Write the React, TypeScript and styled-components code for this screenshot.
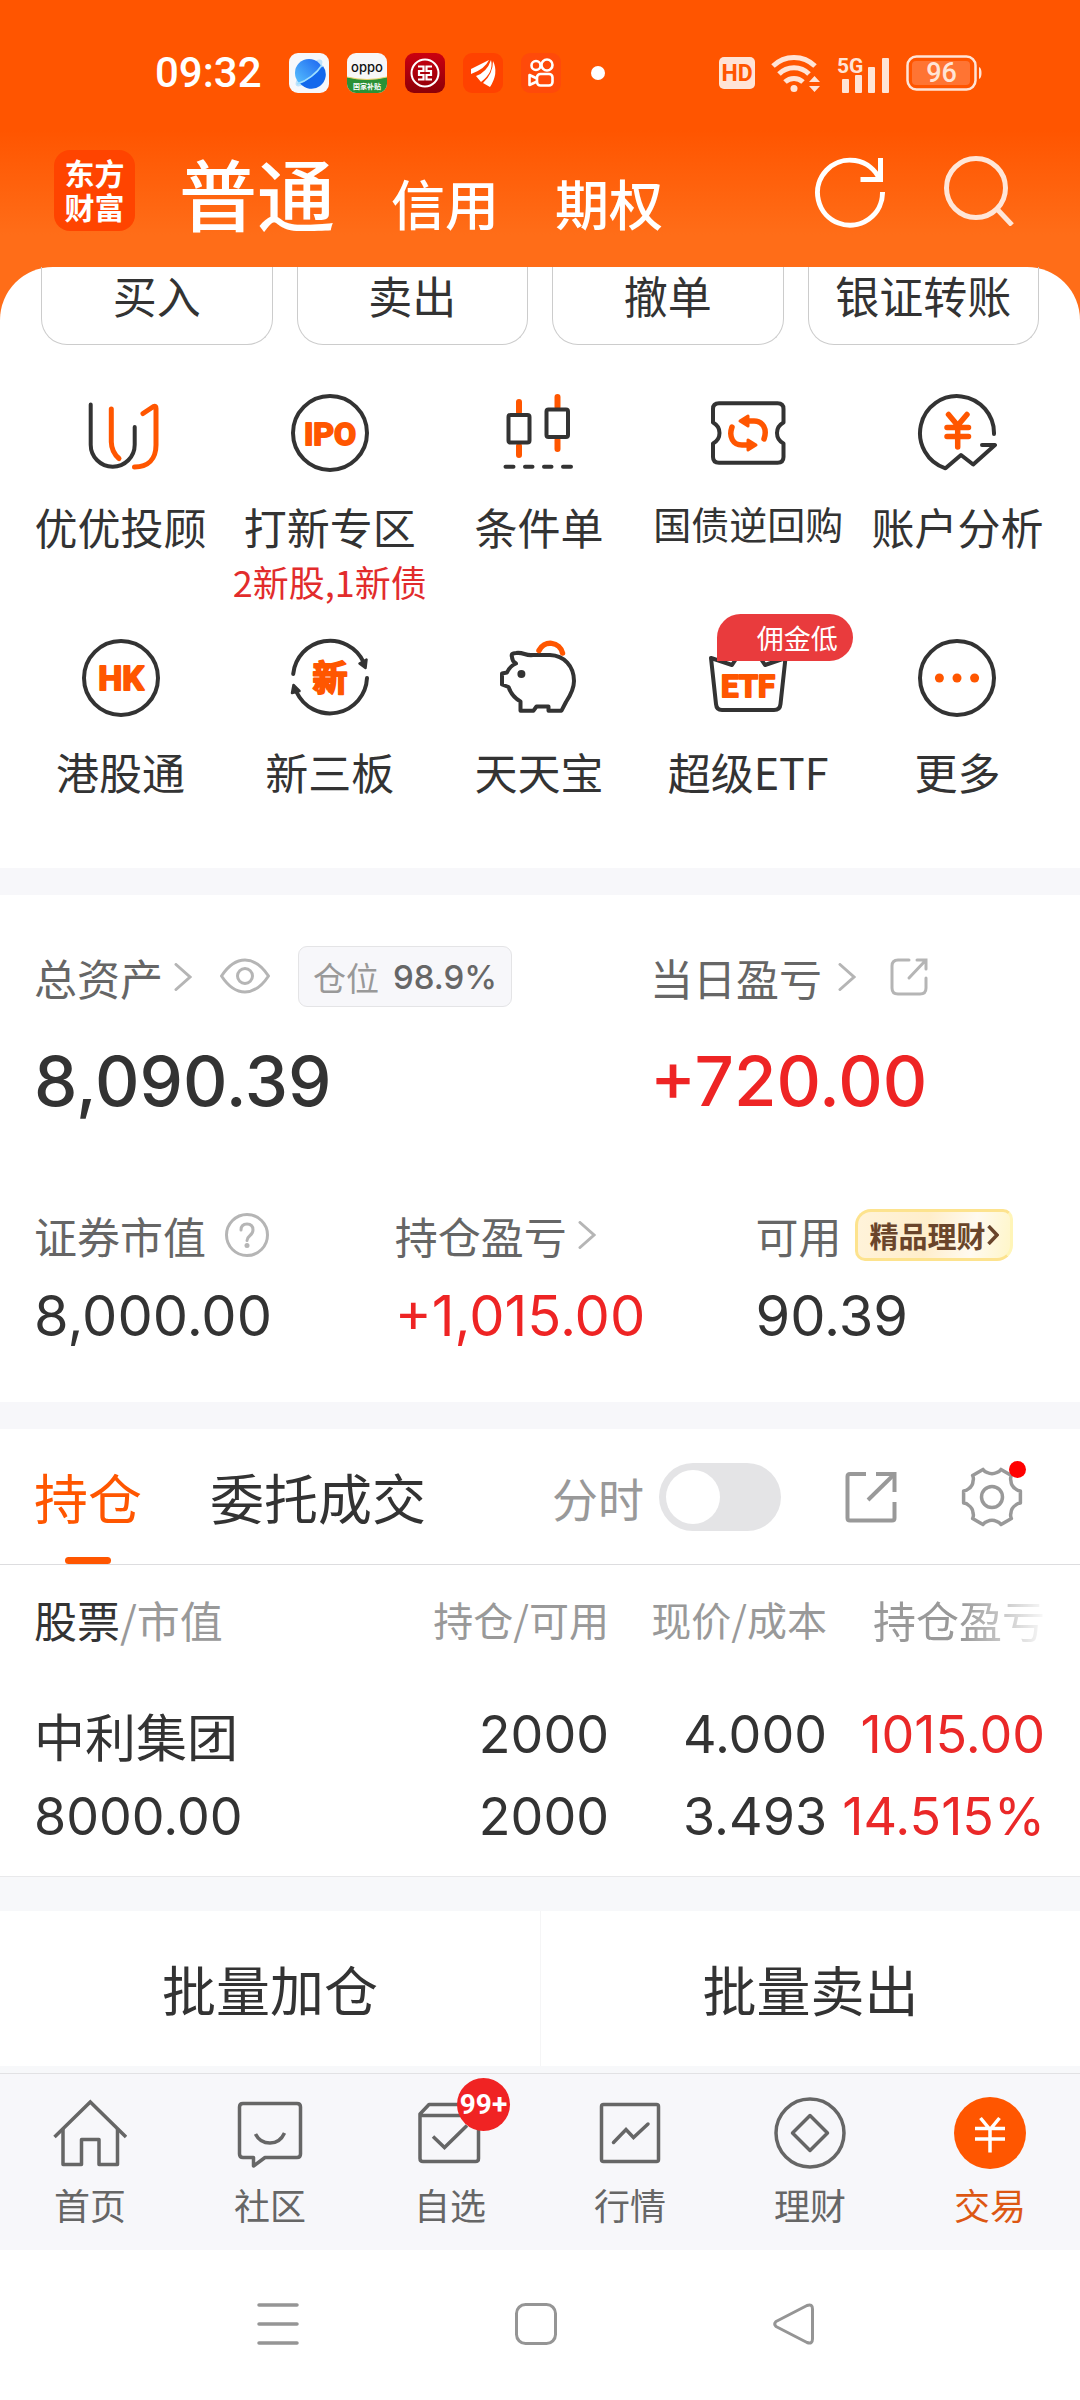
import React, { useState } from "react";
import styled, { createGlobalStyle } from "styled-components";

const ORANGE = "#ff5600";
const INK = "#333333";
const CJK = '"Noto Sans CJK SC", "Noto Sans", sans-serif';
const NUM = 'Inter, "Noto Sans CJK SC", sans-serif';
const ROBOTO = "Roboto, sans-serif";

const GlobalStyle = createGlobalStyle`
  *, *::before, *::after { box-sizing: border-box; }
  body { margin: 0; background: #ffffff; color: ${INK}; font-family: ${CJK}; }
  button { margin: 0; padding: 0; border: 0; background: none; color: inherit; font: inherit; cursor: pointer; }
  a { color: inherit; text-decoration: none; }
  svg { display: block; flex: none; }
`;

/* ---------- layout ---------- */

const Page = styled.div`
  min-height: 100vh;
  display: flex;
  flex-direction: column;
  background: #ffffff;
`;

const Header = styled.header`
  padding: 53px 0 89px;
  background: linear-gradient(180deg, #ff5500 0, #ff5500 130px, #ff6d18 235px, #ff6d18 100%);
  color: #ffffff;
`;

const StatusBar = styled.div`
  display: flex;
  align-items: center;
  justify-content: space-between;
  height: 40px;
  padding: 0 98px 0 155px;
`;

const StatusGroup = styled.div<{ $gap: number }>`
  display: flex;
  align-items: center;
  gap: ${(p) => p.$gap}px;
`;

const Clock = styled.time`
  margin-right: 9px;
  font-family: ${ROBOTO};
  font-size: 42px;
  font-weight: 500;
  line-height: 40px;
`;

const StatusDot = styled.span`
  width: 14px;
  height: 14px;
  margin-left: 12px;
  border-radius: 50%;
  background: #ffffff;
`;

const TopNav = styled.nav`
  display: flex;
  align-items: center;
  height: 81px;
  margin-top: 57px;
  padding: 0 66px 0 54px;
`;

const Logo = styled.div`
  width: 81px;
  height: 81px;
  padding: 5px 10px;
  border-radius: 16px;
  background: #ff4400;
  font-size: 30px;
  font-weight: 700;
  line-height: 34px;
  text-align: center;
  overflow-wrap: anywhere;
`;

const AccountTabs = styled.div`
  display: flex;
  align-items: baseline;
  gap: 56px;
  margin: 14px 0 0 44px;
`;

const AccountTab = styled.button<{ $active?: boolean }>`
  font-size: ${(p) => (p.$active ? 78 : 54)}px;
  font-weight: 500;
  line-height: 80px;
`;

const TopActions = styled.div`
  display: flex;
  align-items: center;
  gap: 58px;
  margin-left: auto;
`;

const Panel = styled.section`
  margin-top: -53px;
  padding-bottom: 69px;
  border-radius: 53px 53px 0 0;
  background: #ffffff;
`;

const QuickActions = styled.div`
  display: grid;
  grid-template-columns: repeat(4, 1fr);
  gap: 24px;
  padding: 0 41px;
`;

const QuickButton = styled.button`
  padding: 4px 0 24px;
  border: 1px solid #cccccc;
  border-top: 0;
  border-radius: 0 0 26px 26px;
  font-size: 44px;
  line-height: 49px;
`;

const FeatureGrid = styled.div`
  display: grid;
  grid-template-columns: repeat(5, 1fr);
  row-gap: 30px;
  margin-top: 47px;
  padding: 0 18px 0 16px;
`;

const Feature = styled.a`
  position: relative;
  display: flex;
  flex-direction: column;
  align-items: center;
  white-space: nowrap;
`;

const FeatureLabel = styled.span<{ $compact?: boolean }>`
  margin-top: 24px;
  font-size: ${(p) => (p.$compact ? 38 : 43)}px;
  line-height: ${(p) => (p.$compact ? 50 : 56)}px;
`;

const FeatureNote = styled.span`
  margin-top: 3px;
  margin-bottom: 2px;
  color: #e22c2c;
  font-size: 36px;
  line-height: 48px;
`;

const PromoBadge = styled.span`
  position: absolute;
  top: -23px;
  left: 35%;
  padding: 0 15px 0 40px;
  border-radius: 24px 24px 24px 0;
  background: #e93b3d;
  color: #ffffff;
  font-size: 27px;
  line-height: 47px;
`;

const Divider = styled.div`
  height: 27px;
  background: #f7f7fa;
`;

const Assets = styled.section`
  padding: 51px 36px 56px 34px;
`;

const AssetRow = styled.div<{ $columns: string }>`
  display: grid;
  grid-template-columns: ${(p) => p.$columns};

  & + & { margin-top: 88px; }
`;

const AssetHead = styled.div<{ $gap: number; $height: number }>`
  display: flex;
  align-items: center;
  gap: ${(p) => p.$gap}px;
  height: ${(p) => p.$height}px;
  color: #666666;
  font-size: 43px;
  line-height: 52px;
  white-space: nowrap;
`;

const AssetLink = styled.a<{ $gap: number }>`
  display: flex;
  align-items: center;
  gap: ${(p) => p.$gap}px;
`;

const AssetValue = styled.div<{ $large?: boolean; $rise?: boolean }>`
  margin-top: ${(p) => (p.$large ? 34 : 25)}px;
  color: ${(p) => (p.$rise ? "#ee2424" : INK)};
  font-family: ${NUM};
  font-size: ${(p) => (p.$large ? 69 : 56)}px;
  font-weight: ${(p) => (p.$large ? 500 : 400)};
  line-height: ${(p) => (p.$large ? 80 : 60)}px;
`;

const PositionTag = styled.span`
  display: flex;
  align-items: center;
  gap: 14px;
  height: 61px;
  padding: 0 14px;
  border: 1px solid #e4e4e6;
  border-radius: 9px;
  background: #f7f7fa;
  color: #999999;
  font-size: 33px;
`;

const PositionValue = styled.b`
  color: #666666;
  font-family: ${NUM};
  font-size: 33px;
  font-weight: 500;
`;

const WealthBadge = styled.a`
  display: flex;
  align-items: center;
  gap: 2px;
  height: 52px;
  padding: 0 11px;
  border: 3px solid #fde38e;
  border-right-color: #fff5b8;
  border-radius: 16px 10px 16px 10px;
  background: linear-gradient(100deg, #fff3da 0%, #ffeecb 45%, #fffaf0 75%, #fff6c8 100%);
  color: #6a452b;
  font-size: 29px;
  font-weight: 700;
`;

const TabBar = styled.div`
  display: flex;
  align-items: center;
  height: 136px;
  padding: 0 57px 0 34px;
  border-bottom: 1px solid #dddddf;
`;

const Tabs = styled.div`
  display: flex;
  align-self: stretch;
  gap: 68px;
`;

const Tab = styled.button<{ $active?: boolean }>`
  position: relative;
  color: ${(p) => (p.$active ? ORANGE : INK)};
  font-size: 54px;
  line-height: 60px;

  &::after {
    content: "";
    display: ${(p) => (p.$active ? "block" : "none")};
    position: absolute;
    bottom: 0;
    left: 50%;
    width: 46px;
    height: 7px;
    border-radius: 4px;
    background: ${ORANGE};
    transform: translateX(-50%);
  }
`;

const TabTools = styled.div`
  display: flex;
  align-items: center;
  gap: 64px;
  margin-left: auto;
`;

const SwitchLabel = styled.label`
  display: flex;
  align-items: center;
  gap: 15px;
  color: #999999;
  font-size: 46px;
  line-height: 60px;
`;

const Switch = styled.input`
  appearance: none;
  position: relative;
  width: 122px;
  height: 68px;
  margin: 0;
  border-radius: 34px;
  background: #e4e4e6;
  cursor: pointer;

  &::before {
    content: "";
    position: absolute;
    top: 7px;
    left: 7px;
    width: 54px;
    height: 54px;
    border-radius: 50%;
    background: #ffffff;
  }

  &:checked { background: ${ORANGE}; }
  &:checked::before { left: 61px; }
`;

const GearButton = styled.button`
  position: relative;

  &::after {
    content: "";
    position: absolute;
    top: -5px;
    right: -3px;
    width: 17px;
    height: 17px;
    border-radius: 50%;
    background: #ff0000;
  }
`;

const TableWrap = styled.div`
  padding: 24px 35px 18px 34px;
  border-bottom: 1px solid #e9e9eb;
`;

const Holdings = styled.table`
  width: 100%;
  border-collapse: collapse;
  table-layout: fixed;
  white-space: nowrap;
`;

const HeadCell = styled.th<{ $width?: number; $size: number; $fade?: boolean }>`
  width: ${(p) => (p.$width ? `${p.$width}px` : "auto")};
  padding: 0 0 45px;
  color: #999999;
  font-size: ${(p) => p.$size}px;
  font-weight: 400;
  line-height: 60px;
  text-align: right;
  ${(p) => p.$fade && "mask-image: linear-gradient(90deg, #000 62%, transparent 102%);"}

  &:first-child { text-align: left; }
`;

const HeadStrong = styled.span`
  color: ${INK};
`;

const Cell = styled.td<{ $rise?: boolean }>`
  padding: 0;
  color: ${(p) => (p.$rise ? "#ea2828" : INK)};
  font-family: ${NUM};
  font-size: 52px;
  line-height: 82px;
  text-align: right;

  &:first-child { text-align: left; }
`;

const StockName = styled.div`
  font-family: ${CJK};
  font-size: 51px;
`;

const BulkArea = styled.div`
  padding: 34px 0 7px;
  background: #f7f8fa;
`;

const BulkActions = styled.div`
  display: grid;
  grid-template-columns: 1fr 1fr;
  background: #ffffff;
`;

const BulkButton = styled.button`
  height: 155px;
  font-size: 54px;

  & + & { border-left: 1px solid #f5f5f6; }
`;

const BottomNav = styled.nav`
  display: grid;
  grid-template-columns: repeat(6, 1fr);
  padding: 22px 0 24px;
  border-top: 1px solid #e2e2e4;
  background: #f7f7fa;
`;

const NavItem = styled.a<{ $active?: boolean }>`
  display: flex;
  flex-direction: column;
  align-items: center;
  gap: 12px;
  color: ${(p) => (p.$active ? "#dd5713" : "#666666")};
  font-size: 36px;
  line-height: 44px;
`;

const NavIcon = styled.span`
  position: relative;
`;

const CountBadge = styled.span`
  position: absolute;
  top: -18px;
  left: 44px;
  width: 53px;
  height: 53px;
  border-radius: 50%;
  background: #f02323;
  color: #ffffff;
  font-family: ${ROBOTO};
  font-size: 28px;
  font-weight: 700;
  line-height: 53px;
  text-align: center;
`;

const SystemNav = styled.div`
  display: flex;
  justify-content: center;
  gap: 216px;
  padding: 53px 8px 53px 0;
`;

/* ---------- status bar drawings ---------- */

const BrowserApp = () => (
  <svg width="40" height="40" viewBox="0 0 40 40">
    <defs>
      <linearGradient id="planet" x1="0" y1="1" x2="1" y2="0">
        <stop offset="0" stopColor="#5cc8ff" />
        <stop offset="1" stopColor="#1a62f0" />
      </linearGradient>
    </defs>
    <rect width="40" height="40" rx="9" fill="#f6f8fb" />
    <ellipse cx="20" cy="20" rx="18" ry="6" fill="#bfe2fb" transform="rotate(-45 20 20)" />
    <circle cx="20" cy="20" r="14" fill="url(#planet)" />
    <path d="M9 31C19 28 29 20 34 13A14 14 0 0 1 11 30z" fill="#1368ec" />
    <path d="M8 31C18 28 28 20 33 12" stroke="#9fe0ff" strokeWidth="1.5" fill="none" />
  </svg>
);

const OppoApp = () => (
  <svg width="40" height="40" viewBox="0 0 40 40">
    <rect width="40" height="40" rx="9" fill="#f7f7f7" />
    <path d="M0 24Q20 29 40 24V31a9 9 0 0 1-9 9H9a9 9 0 0 1-9-9z" fill="#2b9136" />
    <path d="M0 24Q20 29 40 24" stroke="#e9d36a" strokeWidth="1" fill="none" />
    <text x="20" y="19" fontFamily="Inter, sans-serif" fontSize="13" fontWeight="500" fill="#111" textAnchor="middle">oppo</text>
    <text x="20" y="36" fontFamily='"Noto Sans CJK SC", sans-serif' fontSize="7" fontWeight="700" fill="#fff" textAnchor="middle">国家补贴</text>
  </svg>
);

const BankApp = () => (
  <svg width="40" height="40" viewBox="0 0 40 40" fill="none" stroke="#fff">
    <defs>
      <linearGradient id="bank" x1="0" y1="0" x2="0" y2="1">
        <stop offset="0" stopColor="#cc0010" />
        <stop offset="1" stopColor="#8c0008" />
      </linearGradient>
    </defs>
    <rect width="40" height="40" rx="9" fill="url(#bank)" stroke="none" />
    <circle cx="20" cy="20" r="13.500" strokeWidth="2" />
    <path d="M13 13.500H18.500V18H14V22H18.500V26.500H13M27 13.500H21.500V18H26V22H21.500V26.500H27" strokeWidth="2.200" />
  </svg>
);

const WingApp = () => (
  <svg width="40" height="40" viewBox="0 0 40 40" fill="#fff">
    <rect width="40" height="40" rx="9" fill="#ff4200" />
    <path d="M8 16Q16 12 26 7Q22 16 8 21z" />
    <path d="M13 23Q24 19 28 7Q31 19 18 29z" />
    <path d="M20 30Q30 21 30 8Q36 20 27 34z" />
  </svg>
);

const VideoApp = () => (
  <svg width="40" height="40" viewBox="0 0 40 40" fill="none" stroke="#fff" strokeWidth="2.6" strokeLinejoin="round">
    <rect width="40" height="40" rx="9" fill="#ff4a0a" stroke="none" />
    <circle cx="15" cy="12.500" r="4.500" />
    <circle cx="26" cy="12" r="5.500" />
    <rect x="16" y="21" width="15.500" height="11.500" rx="3.500" />
    <path d="M16 25.500L8.500 22V32L16 28.500" />
  </svg>
);

const HdIcon = () => (
  <svg width="36" height="32" viewBox="0 0 36 32">
    <rect width="36" height="32" rx="5" fill="#ffe4d6" />
    <text x="18" y="24" fontFamily={ROBOTO} fontSize="23" fontWeight="700" fill={ORANGE} textAnchor="middle">HD</text>
  </svg>
);

const WifiIcon = () => (
  <svg width="50" height="40" viewBox="0 0 50 40" fill="none" stroke="#ffe4d6" strokeWidth="5">
    <path d="M2 13A30 30 0 0 1 44 13M8 21A21 21 0 0 1 38 21M14 29A13 13 0 0 1 32 29" />
    <circle cx="23" cy="35.500" r="3.500" fill="#ffe4d6" stroke="none" />
    <path d="M38 29L43.500 23L49 29zM38 33L43.500 39L49 33z" fill="#ffe4d6" stroke="none" />
  </svg>
);

const SignalIcon = () => (
  <svg width="53" height="44" viewBox="0 -4 53 44" fill="#ffe4d6">
    <text x="0" y="18" fontFamily={ROBOTO} fontSize="21" fontWeight="700">5G</text>
    <rect x="5" y="24" width="7" height="14" rx="1" />
    <rect x="18" y="20" width="7" height="18" rx="1" />
    <rect x="31" y="12" width="7" height="26" rx="1" />
    <rect x="45" y="3" width="7" height="35" rx="1" />
  </svg>
);

const BatteryIcon = () => (
  <svg width="76" height="36" viewBox="0 0 76 36">
    <rect x="1.500" y="1.500" width="68" height="33" rx="9" fill="none" stroke="#ffe4d6" strokeWidth="2.500" />
    <rect x="6" y="6" width="58" height="24" rx="4" fill="#ff7433" />
    <path d="M73 12Q75.500 13 75.500 18T73 24z" fill="#ffe4d6" />
    <text x="35.500" y="27" fontFamily={ROBOTO} fontSize="27" fontWeight="500" fill="#ffe4d6" textAnchor="middle">96</text>
  </svg>
);

/* ---------- header drawings ---------- */

const RefreshIcon = () => (
  <svg width="72" height="74" viewBox="0 0 72 74" fill="none" stroke="#fff" strokeWidth="5">
    <path d="M68.500 38A32.500 32.500 0 1 1 65.500 25" />
    <path d="M66.500 4V25.500H46.500" />
  </svg>
);

const SearchIcon = () => (
  <svg width="70" height="70" viewBox="0 0 70 70" fill="none" stroke="#ffe6d8" strokeWidth="5">
    <circle cx="32" cy="32" r="29.500" />
    <path d="M53 53L68 69" />
  </svg>
);

/* ---------- feature drawings ---------- */

const FeatureSvg = ({ children }: { children: React.ReactNode }) => (
  <svg width="82" height="82" viewBox="0 0 82 82" fill="none" stroke={INK} strokeWidth="4" strokeLinecap="round" strokeLinejoin="round">
    {children}
  </svg>
);

const BadgeText = ({ size, y, family = ROBOTO, children }: { size: number; y: number; family?: string; children: string }) => (
  <text x="41" y={y} textAnchor="middle" fontFamily={family} fontSize={size} fontWeight="700" fill={ORANGE} stroke={ORANGE} strokeWidth="2">
    {children}
  </text>
);

const AdvisorIcon = () => (
  <FeatureSvg>
    <path d="M10.700 12.500V52.700A22 22 0 0 0 54.700 52.700V35" />
    <path d="M31.300 17V50Q31.500 60 39 66.500" stroke={ORANGE} strokeWidth="5" />
    <path d="M63 21.500L73.500 14.500Q76 13.500 76 16.500V53C76 67 68 75 54.500 75" stroke={ORANGE} strokeWidth="5" />
  </FeatureSvg>
);

const IpoIcon = () => (
  <FeatureSvg>
    <circle cx="41" cy="41" r="37" />
    <BadgeText size={32} y={53}>IPO</BadgeText>
  </FeatureSvg>
);

const CandleIcon = () => (
  <FeatureSvg>
    <path d="M21 10V20M21 54V63M59.500 5V15M59.500 48V57" stroke={ORANGE} strokeWidth="6" />
    <rect x="10.500" y="23" width="21" height="27.500" rx="2" />
    <rect x="48.500" y="17.500" width="21.500" height="27.500" rx="2" />
    <path d="M7.500 74.700H15.500M27 74.700H34.500M46 74.700H53.500M65 74.700H73" />
  </FeatureSvg>
);

const RepoIcon = () => (
  <FeatureSvg>
    <path d="M12 11.300H70.500Q76.500 11.300 76.500 17V30.500Q70 34 70 41T76.500 51.500V65Q76.500 70.700 70.500 70.700H12Q6 70.700 6 65V51.500Q12.500 48 12.500 41T6 30.500V17Q6 11.300 12 11.300z" />
    <g stroke={ORANGE} strokeWidth="5.500">
      <path d="M42 29H47C56 29 60.500 37 57 47M40 53H35C26 53 21.500 45 25 35" />
      <path d="M33 29L41 24V34zM49 53L41 48V58z" fill={ORANGE} strokeWidth="3" />
    </g>
  </FeatureSvg>
);

const AnalysisIcon = () => (
  <FeatureSvg>
    <path d="M78 42A37 37 0 1 0 29.500 76.300L45 63L57.200 72.500L79 53H66" />
    <path d="M32.500 22.500L41.700 33.500L51 22.500M41.700 34V55M31 35.500H52.500M31 44.500H52.500" stroke={ORANGE} strokeWidth="5.500" />
  </FeatureSvg>
);

const HkIcon = () => (
  <FeatureSvg>
    <circle cx="41" cy="41" r="37" />
    <BadgeText size={34} y={53}>HK</BadgeText>
  </FeatureSvg>
);

const NewBoardIcon = () => (
  <FeatureSvg>
    <path d="M4.200 37A37 37 0 0 1 74.500 25M78 41A37 37 0 0 1 7.500 55" />
    <path d="M77.500 22.500L76.500 31L70.500 26.500zM4.500 48L10.500 54L3 56z" fill={INK} strokeWidth="2.500" />
    <BadgeText size={35} y={54} family={'"Noto Sans CJK SC", sans-serif'}>新</BadgeText>
  </FeatureSvg>
);

const PigIcon = () => (
  <FeatureSvg>
    <path d="M14 20Q12.500 16 18 16C26 15 27 19 35 18H52C66 18.500 76 29 76 44C76 52 72 59 68 65L63.500 73.700H50.500V69.500H38.500L35.500 73.700H22.500V64.500Q14 60 10.500 50L4 47.500V36.500L9 35.500Q12 29 18 26.500Q14 24 14 20z" />
    <circle cx="23.400" cy="37" r="4" fill={INK} stroke="none" />
    <path d="M41 13.500A12.500 12.500 0 0 1 64.500 16" stroke={ORANGE} strokeWidth="5.500" />
  </FeatureSvg>
);

const EtfIcon = () => (
  <FeatureSvg>
    <path d="M4 21L25 28L31 19H52L58 28L78.500 21L73.500 67Q73 73 67 73H15Q9.500 73 9 67z" />
    <BadgeText size={31} y={60}>ETF</BadgeText>
  </FeatureSvg>
);

const MoreIcon = () => (
  <FeatureSvg>
    <circle cx="41" cy="41" r="37" />
    <g fill={ORANGE} stroke="none">
      <circle cx="23.400" cy="41" r="4.500" />
      <circle cx="41" cy="41" r="4.500" />
      <circle cx="58.600" cy="41" r="4.500" />
    </g>
  </FeatureSvg>
);

/* ---------- small drawings ---------- */

const Chevron = () => (
  <svg width="18" height="28" viewBox="0 0 18 28" fill="none" stroke="#b5b5b5" strokeWidth="3" strokeLinecap="round">
    <path d="M2 1.500L16 14L2 26.500" />
  </svg>
);

const EyeIcon = () => (
  <svg width="50" height="38" viewBox="0 0 50 38" fill="none" stroke="#b5b5b5" strokeWidth="3">
    <path d="M1.500 18Q12 2 25 2T48.500 18Q38 34 25 34T1.500 18z" strokeLinejoin="round" />
    <circle cx="25" cy="18" r="7.500" />
  </svg>
);

const SmallShareIcon = () => (
  <svg width="38" height="38" viewBox="0 0 38 38" fill="none" stroke="#b5b5b5" strokeWidth="3" strokeLinecap="round">
    <path d="M19 2H8Q2 2 2 8V30Q2 36 8 36H30Q36 36 36 30V20M27 2H36V11M35.500 2.500L19 20" />
  </svg>
);

const HelpIcon = () => (
  <svg width="44" height="44" viewBox="0 0 44 44" fill="none" stroke="#b5b5b5" strokeWidth="3" strokeLinecap="round">
    <circle cx="22" cy="22" r="20.500" />
    <path d="M16 17Q16 11 22 11T28 17Q28 20 25 22.500Q22 25 22 27.500" />
    <circle cx="22" cy="32.500" r="2.500" fill="#b5b5b5" stroke="none" />
  </svg>
);

const BadgeChevron = () => (
  <svg width="12" height="20" viewBox="0 0 12 20" fill="none" stroke="#6a452b" strokeWidth="3.500">
    <path d="M1.500 1L10 10L1.500 19" />
  </svg>
);

const ShareIcon = () => (
  <svg width="52" height="52" viewBox="0 0 52 52" fill="none" stroke="#999" strokeWidth="4">
    <path d="M21 3H5Q2.500 3 2.500 5.500V47Q2.500 49.500 5 49.500H47Q49.500 49.500 49.500 47V31M31 3H49.500V21" />
    <path d="M49 3.500L23 29" />
  </svg>
);

const gearPath = (() => {
  const at = (radius: number, degrees: number) => {
    const a = (degrees * Math.PI) / 180;
    return `${(31 + radius * Math.cos(a)).toFixed(1)} ${(31 + radius * Math.sin(a)).toFixed(1)}`;
  };
  let d = `M${at(29, -12)}`;
  for (let k = 0; k < 6; k += 1) {
    const lobe = k * 60;
    d += `L${at(29, lobe + 12)}Q${at(26, lobe + 14)} ${at(25, lobe + 19)}Q${at(22, lobe + 30)} ${at(25, lobe + 41)}Q${at(26, lobe + 46)} ${at(29, lobe + 48)}`;
  }
  return `${d}z`;
})();

const GearIcon = () => (
  <svg width="62" height="62" viewBox="0 0 62 62" fill="none" stroke="#999" strokeWidth="3.500" strokeLinejoin="round">
    <path d={gearPath} />
    <circle cx="31" cy="31" r="10.500" />
  </svg>
);

/* ---------- bottom navigation drawings ---------- */

const NavSvg = ({ children }: { children: React.ReactNode }) => (
  <svg width="74" height="74" viewBox="0 0 74 74" fill="none" stroke="#666" strokeWidth="3.500">
    {children}
  </svg>
);

const HomeIcon = () => (
  <NavSvg>
    <path d="M1.500 41L37.300 6L73 41" />
    <path d="M10 33V68.500H28.500V43.500H46V68.500H64.500V33" strokeLinejoin="round" />
  </NavSvg>
);

const CommunityIcon = () => (
  <NavSvg>
    <path d="M10 7.500H64Q67.500 7.500 67.500 11V58Q67.500 61.500 64 61.500H32L20.500 70V61.500H10Q6.500 61.500 6.500 58V11Q6.500 7.500 10 7.500z" strokeLinejoin="round" />
    <path d="M22.500 38Q27 47 37 47T51.500 37" />
  </NavSvg>
);

const WatchlistIcon = () => (
  <NavSvg>
    <path d="M7 19.500H65.500V62.500Q65.500 65.500 62.500 65.500H10Q7 65.500 7 62.500V18L16 8.500H57L65.500 18" strokeLinejoin="round" />
    <path d="M20 40.500L31.500 51.500L54 29.500" />
  </NavSvg>
);

const MarketIcon = () => (
  <NavSvg>
    <rect x="8.500" y="8.500" width="57" height="57" rx="2" />
    <path d="M20.500 46.500L33 33.500L40.500 41.500L55 28" strokeLinecap="round" />
  </NavSvg>
);

const WealthIcon = () => (
  <NavSvg>
    <circle cx="37" cy="37" r="34" />
    <path d="M37 19.500L54.500 37L37 54.500L19.500 37z" strokeLinejoin="round" />
  </NavSvg>
);

const TradeIcon = () => (
  <NavSvg>
    <circle cx="37" cy="37" r="36" fill={ORANGE} stroke="none" />
    <path d="M27.500 22L37 33.500L46.500 22M37 33V56.500M22 32.500H52M22 43H52" stroke="#fff" />
  </NavSvg>
);

/* ---------- data ---------- */

const quickActions = ["买入", "卖出", "撤单", "银证转账"];

const features = [
  { label: "优优投顾", Icon: AdvisorIcon },
  { label: "打新专区", Icon: IpoIcon, note: "2新股,1新债" },
  { label: "条件单", Icon: CandleIcon },
  { label: "国债逆回购", Icon: RepoIcon, compact: true },
  { label: "账户分析", Icon: AnalysisIcon },
  { label: "港股通", Icon: HkIcon },
  { label: "新三板", Icon: NewBoardIcon },
  { label: "天天宝", Icon: PigIcon },
  { label: "超级ETF", Icon: EtfIcon, badge: "佣金低" },
  { label: "更多", Icon: MoreIcon },
];

const holdings = [
  { name: "中利集团", value: "8000.00", held: "2000", usable: "2000", price: "4.000", cost: "3.493", profit: "1015.00", rate: "14.515%" },
];

const navItems = [
  { label: "首页", Icon: HomeIcon },
  { label: "社区", Icon: CommunityIcon },
  { label: "自选", Icon: WatchlistIcon, count: "99+" },
  { label: "行情", Icon: MarketIcon },
  { label: "理财", Icon: WealthIcon },
  { label: "交易", Icon: TradeIcon, active: true },
];

export default function App() {
  const [chartOn, setChartOn] = useState(false);

  return (
    <Page>
      <GlobalStyle />
      <Header>
        <StatusBar>
          <StatusGroup $gap={18}>
            <Clock>09:32</Clock>
            <BrowserApp />
            <OppoApp />
            <BankApp />
            <WingApp />
            <VideoApp />
            <StatusDot />
          </StatusGroup>
          <StatusGroup $gap={16}>
            <HdIcon />
            <WifiIcon />
            <SignalIcon />
            <BatteryIcon />
          </StatusGroup>
        </StatusBar>
        <TopNav>
          <Logo>东方财富</Logo>
          <AccountTabs>
            <AccountTab $active>普通</AccountTab>
            <AccountTab>信用</AccountTab>
            <AccountTab>期权</AccountTab>
          </AccountTabs>
          <TopActions>
            <button aria-label="刷新"><RefreshIcon /></button>
            <button aria-label="搜索"><SearchIcon /></button>
          </TopActions>
        </TopNav>
      </Header>

      <Panel>
        <QuickActions>
          {quickActions.map((name) => (
            <QuickButton key={name}>{name}</QuickButton>
          ))}
        </QuickActions>
        <FeatureGrid>
          {features.map(({ label, Icon, note, compact, badge }) => (
            <Feature key={label} href="#">
              <Icon />
              <FeatureLabel $compact={compact}>{label}</FeatureLabel>
              {note && <FeatureNote>{note}</FeatureNote>}
              {badge && <PromoBadge>{badge}</PromoBadge>}
            </Feature>
          ))}
        </FeatureGrid>
      </Panel>

      <Divider />

      <Assets>
        <AssetRow $columns="61fr 39fr">
          <div>
            <AssetHead $gap={28} $height={61}>
              <AssetLink $gap={11} href="#">总资产<Chevron /></AssetLink>
              <button aria-label="隐藏金额"><EyeIcon /></button>
              <PositionTag>仓位<PositionValue>98.9%</PositionValue></PositionTag>
            </AssetHead>
            <AssetValue $large>8,090.39</AssetValue>
          </div>
          <div>
            <AssetHead $gap={34} $height={61}>
              <AssetLink $gap={16} href="#">当日盈亏<Chevron /></AssetLink>
              <button aria-label="分享当日盈亏"><SmallShareIcon /></button>
            </AssetHead>
            <AssetValue $large $rise>+720.00</AssetValue>
          </div>
        </AssetRow>
        <AssetRow $columns="5fr 5fr 4fr">
          <div>
            <AssetHead $gap={19} $height={52}>
              证券市值
              <button aria-label="说明"><HelpIcon /></button>
            </AssetHead>
            <AssetValue>8,000.00</AssetValue>
          </div>
          <div>
            <AssetHead $gap={19} $height={52}>
              <AssetLink $gap={11} href="#">持仓盈亏<Chevron /></AssetLink>
            </AssetHead>
            <AssetValue $rise>+1,015.00</AssetValue>
          </div>
          <div>
            <AssetHead $gap={14} $height={52}>
              可用
              <WealthBadge href="#">精品理财<BadgeChevron /></WealthBadge>
            </AssetHead>
            <AssetValue>90.39</AssetValue>
          </div>
        </AssetRow>
      </Assets>

      <Divider />

      <section>
        <TabBar>
          <Tabs>
            <Tab $active>持仓</Tab>
            <Tab>委托成交</Tab>
          </Tabs>
          <TabTools>
            <SwitchLabel htmlFor="chart-switch">
              分时
              <Switch
                id="chart-switch"
                type="checkbox"
                checked={chartOn}
                onChange={(e) => setChartOn(e.target.checked)}
              />
            </SwitchLabel>
            <button aria-label="分享持仓"><ShareIcon /></button>
            <GearButton aria-label="设置"><GearIcon /></GearButton>
          </TabTools>
        </TabBar>
        <TableWrap>
          <Holdings>
            <thead>
              <tr>
                <HeadCell $size={43}><HeadStrong>股票</HeadStrong>/市值</HeadCell>
                <HeadCell $size={40} $width={218}>持仓/可用</HeadCell>
                <HeadCell $size={40} $width={218}>现价/成本</HeadCell>
                <HeadCell $size={43} $width={218} $fade>持仓盈亏</HeadCell>
              </tr>
            </thead>
            <tbody>
              {holdings.map((h) => (
                <tr key={h.name}>
                  <Cell>
                    <StockName>{h.name}</StockName>
                    <div>{h.value}</div>
                  </Cell>
                  <Cell>
                    <div>{h.held}</div>
                    <div>{h.usable}</div>
                  </Cell>
                  <Cell>
                    <div>{h.price}</div>
                    <div>{h.cost}</div>
                  </Cell>
                  <Cell $rise>
                    <div>{h.profit}</div>
                    <div>{h.rate}</div>
                  </Cell>
                </tr>
              ))}
            </tbody>
          </Holdings>
        </TableWrap>
        <BulkArea>
          <BulkActions>
            <BulkButton>批量加仓</BulkButton>
            <BulkButton>批量卖出</BulkButton>
          </BulkActions>
        </BulkArea>
      </section>

      <BottomNav>
        {navItems.map(({ label, Icon, count, active }) => (
          <NavItem key={label} href="#" $active={active}>
            <NavIcon>
              <Icon />
              {count && <CountBadge>{count}</CountBadge>}
            </NavIcon>
            {label}
          </NavItem>
        ))}
      </BottomNav>

      <SystemNav>
        <button aria-label="最近任务">
          <svg width="42" height="42" viewBox="0 0 42 42" stroke="#959595" strokeWidth="3.500" strokeLinecap="round">
            <path d="M2 2H40M2 21H40M2 40H40" />
          </svg>
        </button>
        <button aria-label="主屏幕">
          <svg width="42" height="42" viewBox="0 0 42 42" fill="none" stroke="#959595" strokeWidth="3">
            <rect x="1.500" y="1.500" width="39" height="39" rx="9" />
          </svg>
        </button>
        <button aria-label="返回">
          <svg width="42" height="42" viewBox="0 0 42 42" fill="none" stroke="#959595" strokeWidth="3" strokeLinejoin="round">
            <path d="M3 18.500L34 2.500Q39.500 0.500 39.500 6V36Q39.500 41.500 34 39.500L3 23.500Q0.500 21 3 18.500z" />
          </svg>
        </button>
      </SystemNav>
    </Page>
  );
}
